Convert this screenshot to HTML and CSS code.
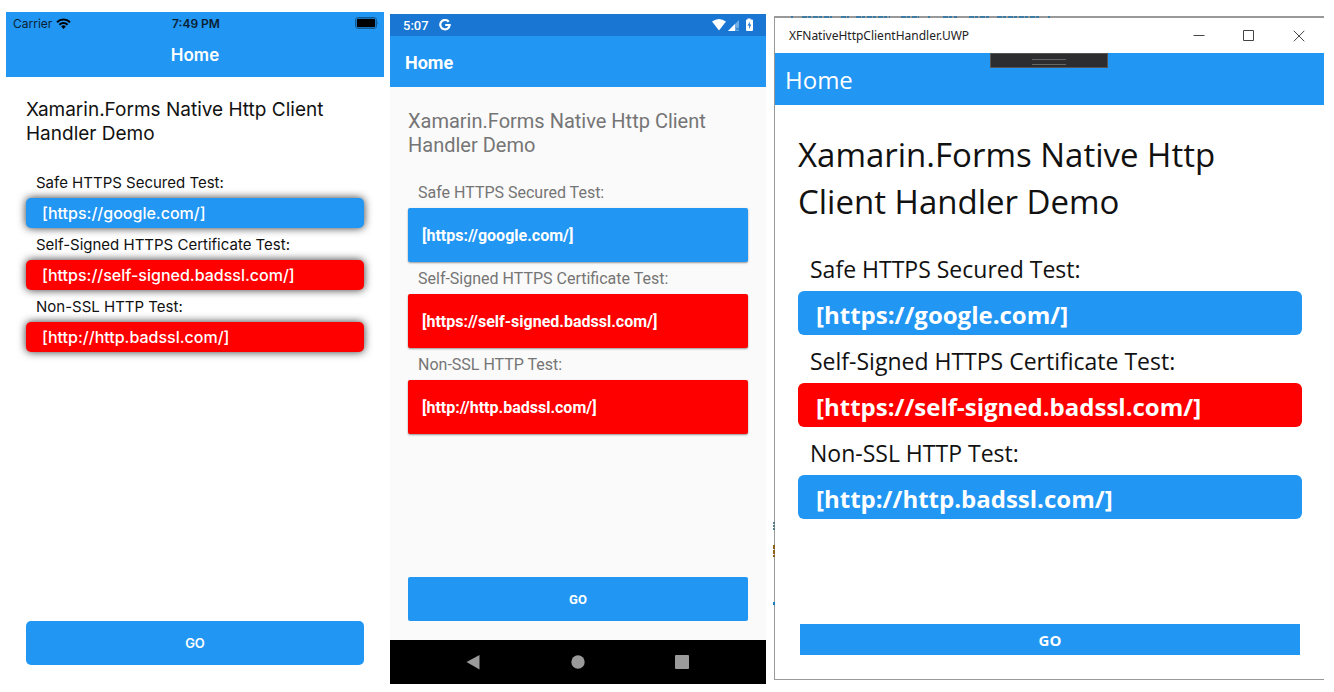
FILE: index.html
```html
<!DOCTYPE html>
<html lang="en">
<head>
<meta charset="utf-8">
<meta name="viewport" content="width=device-width, initial-scale=1">
<title>Xamarin.Forms Native Http Client Handler Demo</title>
<link rel="stylesheet" href="styles.css">
</head>
<body>
<main class="devices">
  <section class="device ios" aria-label="iOS">
    <header class="bar">
      <div class="status">
        <span class="carrier">Carrier
          <svg width="15" height="11" viewBox="0 0 15 11" aria-hidden="true"><g fill="none" stroke="#000" stroke-width="2"><path d="M1 4.2a9.3 9.3 0 0 1 13 0"/><path d="M3.4 6.7a5.8 5.8 0 0 1 8.2 0"/></g><path d="M5.2 8.5a3.2 3.2 0 0 1 4.6 0L7.500 11z"/></svg>
        </span>
        <span class="clock">7:49 PM</span>
        <svg class="battery" width="24" height="12" viewBox="0 0 24 12" aria-hidden="true"><rect x=".5" y=".5" width="21" height="11" rx="2.500" fill="none" stroke="#125a94"/><rect x="1.800" y="1.800" width="18.400" height="8.400" rx="1.200"/><path d="M22.500 4.500q1.500 1.500 0 3z" fill="#125a94"/></svg>
      </div>
      <h1 class="nav-title">Home</h1>
    </header>
    <div class="content">
      <h2 class="title">Xamarin.Forms Native Http Client Handler Demo</h2>
      <p class="caption">Safe HTTPS Secured Test:</p>
      <a class="url blue" href="https://google.com/">[https://google.com/]</a>
      <p class="caption">Self-Signed HTTPS Certificate Test:</p>
      <a class="url red" href="https://self-signed.badssl.com/">[https://self-signed.badssl.com/]</a>
      <p class="caption">Non-SSL HTTP Test:</p>
      <a class="url red" href="http://http.badssl.com/">[http://http.badssl.com/]</a>
      <button class="go" type="button">GO</button>
    </div>
  </section>

  <section class="device android" aria-label="Android">
    <header class="bar">
      <div class="status">
        <span>5:07</span>
        <svg width="12" height="12" viewBox="0 0 12 12" aria-hidden="true"><path d="M9.700 2.700A4.700 4.700 0 1 0 10.700 6H6.200" fill="none" stroke="#fff" stroke-width="2.200"/></svg>
        <svg class="signals" width="42" height="14" viewBox="0 0 42 14" aria-hidden="true"><path d="M0 3.500Q7-1.700 14 3.500L7 12.500z" fill="#fff"/><path d="M16 13L27 2v11z" fill="#75aee4"/><path d="M16 13l7-7v7z" fill="#fff"/><path d="M24 9.500l3 3m0-3l-3 3" stroke="#1976d2"/><path d="M35.500 1.500V.5h3v1H40q1 0 1 1V12q0 1-1 1h-5q-1 0-1-1V2.500q0-1 1-1z" fill="#fff"/><path d="M38 3.500l-2.500 4h1.700L37 11l2.300-4.500h-1.600z" fill="#1976d2"/></svg>
      </div>
      <h1 class="nav-title">Home</h1>
    </header>
    <div class="content">
      <h2 class="title">Xamarin.Forms Native Http Client Handler Demo</h2>
      <p class="caption">Safe HTTPS Secured Test:</p>
      <a class="url blue" href="https://google.com/">[https://google.com/]</a>
      <p class="caption">Self-Signed HTTPS Certificate Test:</p>
      <a class="url red" href="https://self-signed.badssl.com/">[https://self-signed.badssl.com/]</a>
      <p class="caption">Non-SSL HTTP Test:</p>
      <a class="url red" href="http://http.badssl.com/">[http://http.badssl.com/]</a>
      <button class="go" type="button">GO</button>
    </div>
    <nav class="keys" aria-label="System">
      <button type="button" aria-label="Back"><svg width="16" height="16" viewBox="0 0 16 16"><path d="M.5 8L13.500 1v14.500z"/></svg></button>
      <button type="button" aria-label="Home"><svg width="16" height="16" viewBox="0 0 16 16"><circle cx="8" cy="8" r="6.700"/></svg></button>
      <button type="button" aria-label="Recent apps"><svg width="16" height="16" viewBox="0 0 16 16"><rect x="1" y="1" width="14" height="14" rx="1"/></svg></button>
    </nav>
  </section>

  <section class="device uwp" aria-label="Windows">
    <svg class="fringe" width="276" height="2" viewBox="0 0 276 2" aria-hidden="true"><path d="M16 1h2M27 1h30M66 1h8M81 1h34M126 1h18M153 1h2M168 1h14M194 1h20M222 1h44M273 1h2" stroke="#3e7ba5" stroke-width="2" stroke-dasharray="5 1 3 2"/></svg>
    <svg class="specks" width="2" height="90" viewBox="0 0 2 90" aria-hidden="true"><path d="M1 0v8" stroke="#557a88" stroke-width="2" stroke-dasharray="2 1"/><path d="M1 23v12" stroke="#8e6118" stroke-width="2" stroke-dasharray="4 1"/><path d="M1 80v3" stroke="#167fc0" stroke-width="2"/></svg>
    <header class="bar">
      <div class="window-bar">
        <span class="window-name">XFNativeHttpClientHandler.UWP</span>
        <button type="button" aria-label="Minimize"><svg width="12" height="12" viewBox="0 0 12 12"><path d="M.5 5.500h11"/></svg></button>
        <button type="button" aria-label="Maximize"><svg width="12" height="12" viewBox="0 0 12 12"><path d="M.5 .5h10v10H.5z"/></svg></button>
        <button type="button" aria-label="Close"><svg width="12" height="12" viewBox="0 0 12 12"><path d="M.8.8l10.500 10.500M11.300.8L.8 11.300"/></svg></button>
      </div>
      <h1 class="nav-title">Home</h1>
      <span class="debug-tab"></span>
    </header>
    <div class="content">
      <h2 class="title">Xamarin.Forms Native Http Client Handler Demo</h2>
      <p class="caption">Safe HTTPS Secured Test:</p>
      <a class="url blue" href="https://google.com/">[https://google.com/]</a>
      <p class="caption">Self-Signed HTTPS Certificate Test:</p>
      <a class="url red" href="https://self-signed.badssl.com/">[https://self-signed.badssl.com/]</a>
      <p class="caption">Non-SSL HTTP Test:</p>
      <a class="url blue" href="http://http.badssl.com/">[http://http.badssl.com/]</a>
      <button class="go" type="button">GO</button>
    </div>
  </section>
</main>
</body>
</html>
```
FILE: styles.css
```css
* { box-sizing: border-box; }
body { margin: 0; background: #fff; }
h1, h2, p { margin: 0; font-weight: 400; }
button { border: 0; padding: 0; background: none; font: inherit; }
svg { display: block; flex: none; }

.devices {
  display: grid;
  grid-template-columns: 378fr 382fr 558fr;
  min-height: 100vh;
  padding: 12px 10px 8px 6px;
}
.device { display: flex; flex-direction: column; min-width: 0; }
.content { flex: 1; display: flex; flex-direction: column; }
.bar { background: #2196f3; color: #fff; }
.status { display: flex; align-items: center; }
.url { display: flex; align-items: center; color: #fff; text-decoration: none; }
.blue { background: #2196f3; }
.red { background: #f00; }
.caption { display: flex; align-items: center; height: 32px; }
.go { margin-top: auto; height: 44px; background: #2196f3; color: #fff; }

/* iOS */
.ios { font-family: Inter, "Liberation Sans", sans-serif; color: #111; }
.ios .status {
  display: grid;
  grid-template-columns: 1fr auto 1fr;
  height: 22px;
  padding: 0 5px 0 7px;
  color: #0a1f33;
  font-size: 12px;
}
.ios .carrier { display: flex; align-items: center; gap: 4px; }
.ios .clock { font-weight: 600; }
.ios .battery { justify-self: end; }
.ios .nav-title { height: 43px; font-size: 17px; font-weight: 600; line-height: 42px; text-align: center; }
.ios .content { padding: 21px 20px 19px; }
.ios .title { margin-bottom: 20px; font-size: 19px; line-height: 24px; }
.ios .caption { height: 32px; padding-left: 10px; font-size: 15px; }
.ios .url {
  height: 30px;
  padding-left: 16px;
  border-radius: 5px;
  box-shadow: 0 0 8px rgba(0, 0, 0, .8);
  font-size: 16px;
  font-weight: 500;
}
.ios .go { border-radius: 5px; font-size: 13px; font-weight: 600; }

/* Android */
.android { margin: 2px 0 0 6px; background: #fafafa; color: #757575; font-family: Roboto, "Liberation Sans", sans-serif; }
.android .status { gap: 10px; height: 22px; padding: 0 12px 0 13px; background: #1976d2; font-size: 13px; font-weight: 500; }
.android .signals { margin-left: auto; }
.android .nav-title { height: 51px; padding-left: 15px; font-size: 18px; font-weight: 700; line-height: 53px; }
.android .content { padding: 22px 18px 19px; }
.android .title { margin-bottom: 19px; font-size: 20px; line-height: 24px; }
.android .caption { padding-left: 10px; font-size: 16px; }
.android .url {
  height: 54px;
  padding-left: 14px;
  border-radius: 2px;
  box-shadow: 0 1px 2px rgba(0, 0, 0, .4);
  font-size: 16px;
  font-weight: 700;
}
.android .go { border-radius: 2px; font-size: 13px; font-weight: 700; }
.keys { display: flex; justify-content: center; gap: 88px; height: 44px; align-items: center; background: #000; }
.keys svg { fill: #9a9a9a; }

/* Windows */
.uwp {
  position: relative;
  margin: 4px 0 4px 8px;
  border: solid #999;
  border-width: 2px 0 1px 1px;
  color: #111;
  font-family: "Open Sans", "Noto Sans", sans-serif;
}
.fringe { position: absolute; top: -2px; left: 0; }
.specks { position: absolute; top: 504px; left: -2px; }
.uwp .bar { position: relative; }
.window-bar { display: flex; align-items: center; height: 35px; padding-left: 14px; background: #fff; color: #222; font-family: "Noto Sans", sans-serif; font-size: 12px; }
.window-name { flex: 1; }
.window-bar button { display: flex; justify-content: center; width: 50px; }
.window-bar svg { fill: none; stroke: #444; }
.debug-tab {
  position: absolute;
  top: 35px;
  left: 215px;
  width: 118px;
  height: 15px;
  border: 1px solid #555;
  background: #2d2d30;
}
.debug-tab::after {
  content: "";
  position: absolute;
  top: 5px;
  left: 41px;
  width: 34px;
  height: 4px;
  border: solid #666;
  border-width: 1px 0;
}
.uwp .nav-title { height: 52px; padding-left: 10px; font-size: 24px; line-height: 54px; }
.uwp .content { padding: 26px 22px 24px 23px; }
.uwp .title { margin-bottom: 18px; font-size: 33px; line-height: 47px; }
.uwp .caption { height: 48px; padding: 3px 0 0 12px; font-size: 23px; }
.uwp .url { height: 44px; padding: 3px 0 0 18px; border-radius: 6px; font-size: 24px; font-weight: 700; }
.uwp .go { height: 31px; margin: auto 2px 0; font-size: 15px; font-weight: 700; }
```
